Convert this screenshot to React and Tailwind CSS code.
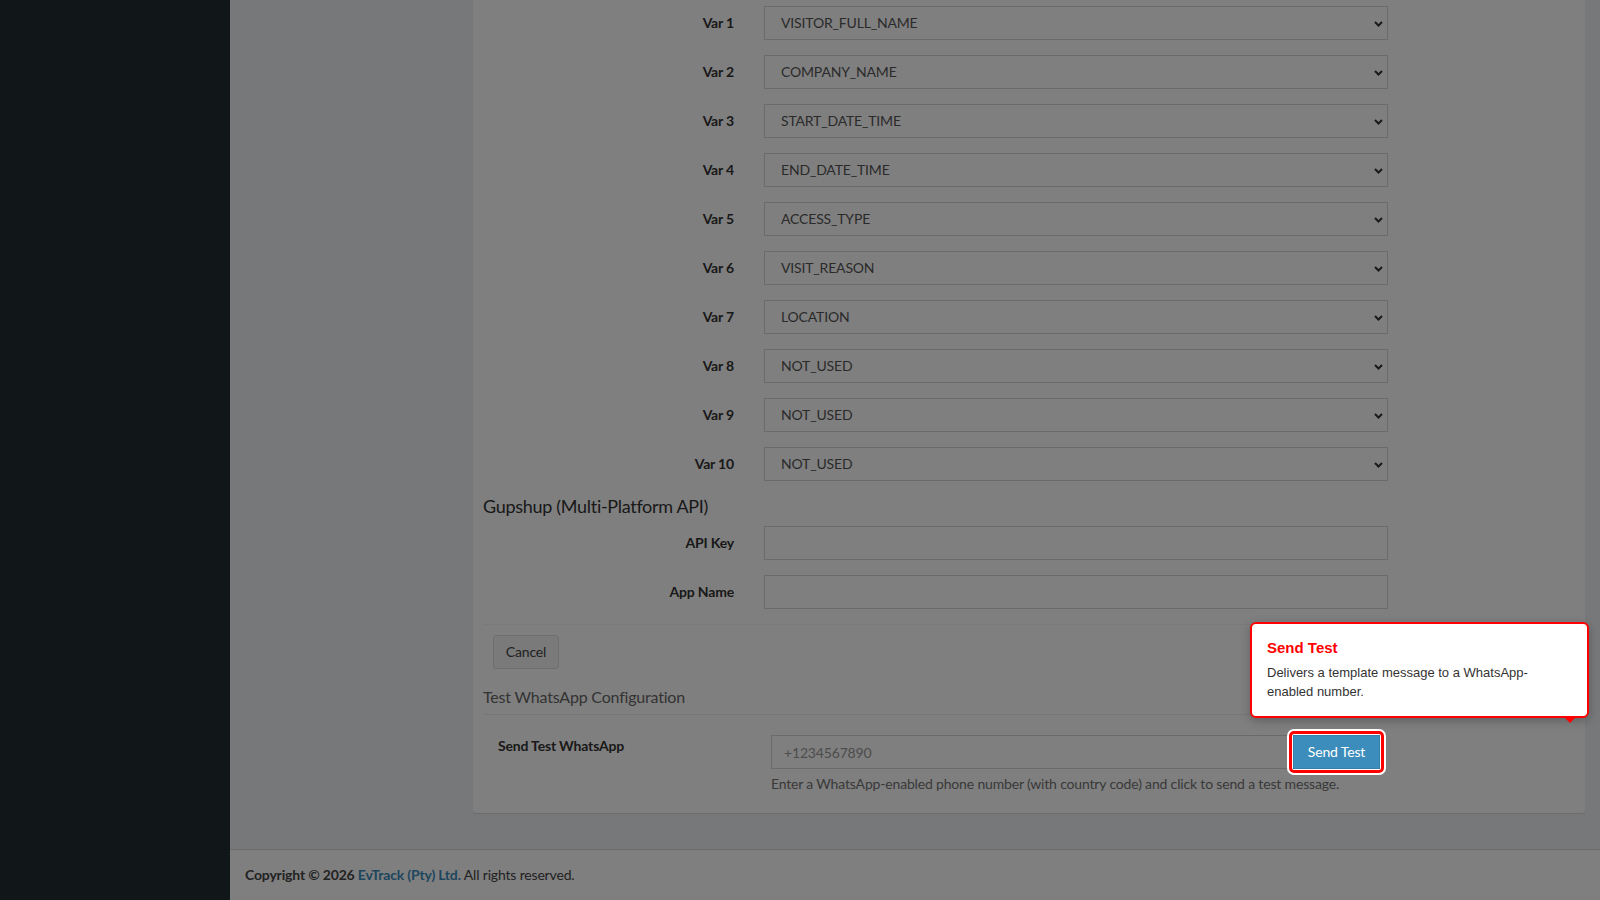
import React from 'react'

const variables = [
    'VISITOR_FULL_NAME',
    'COMPANY_NAME',
    'START_DATE_TIME',
    'END_DATE_TIME',
    'ACCESS_TYPE',
    'VISIT_REASON',
    'LOCATION',
    'NOT_USED',
    'NOT_USED',
    'NOT_USED',
]

function SelectBox({ value }) {
    return (
        <div className="relative flex h-[34px] w-[624px] items-center border border-[#d2d6de] bg-white pl-[16px] text-[#555]">
            {value}
            <svg className="absolute right-[4px] top-[14px]" width="9" height="6" viewBox="0 0 9 6" fill="none">
                <path d="M1 1l3.5 3.5L8 1" stroke="#333" strokeWidth="2" />
            </svg>
        </div>
    )
}

function FormRow({ label, children }) {
    return (
        <div className="mb-[15px] flex items-center">
            <label className="w-[251px] pr-0 text-right font-bold">{label}</label>
            <div className="ml-[30px]">{children}</div>
        </div>
    )
}

export default function App() {
    return (
        <div className="relative flex h-[900px] w-[1600px] overflow-hidden font-['Lato',sans-serif] text-[14px] leading-[20px] tracking-[-0.17px] text-[#333]">
            {/* Sidebar */}
            <aside className="w-[230px] shrink-0 bg-[#222d32]" />

            <div className="flex flex-1 flex-col bg-[#ecf0f5]">
                <main className="flex-1 pl-[243px] pr-[15px]">
                    <div className="rounded-b-[3px] bg-white px-[10px] pb-[19px] pt-[6px] shadow-[0_1px_1px_rgba(0,0,0,0.1)]">
                        {/* Template variables */}
                        {variables.map((v, i) => (
                            <FormRow key={i} label={`Var ${i + 1}`}>
                                <SelectBox value={v} />
                            </FormRow>
                        ))}

                        {/* Gupshup */}
                        <h4 className="mb-[10px] text-[18px] leading-[20px] tracking-[-0.3px] text-[#333]">Gupshup (Multi-Platform API)</h4>
                        <FormRow label="API Key">
                            <input className="h-[34px] w-[624px] border border-[#d2d6de] bg-white px-[12px] outline-none" />
                        </FormRow>
                        <FormRow label="App Name">
                            <input className="h-[34px] w-[624px] border border-[#d2d6de] bg-white px-[12px] outline-none" />
                        </FormRow>

                        <div className="border-t border-[#f4f4f4] px-[10px] pt-[10px]">
                            <button className="h-[34px] w-[66px] rounded-[3px] border border-[#ddd] bg-[#f4f4f4] text-[#444]">Cancel</button>
                        </div>

                        {/* Test section */}
                        <h4 className="mt-[18px] border-b border-[#eee] pb-[7px] text-[16px] leading-[20px] tracking-[-0.2px] text-[#666]">Test WhatsApp Configuration</h4>
                        <div className="mt-[20px] flex">
                            <label className="w-[288px] pl-[15px] pt-[1px] font-bold">Send Test WhatsApp</label>
                            <div>
                                <div className="flex w-[609px]">
                                    <input
                                        placeholder="+1234567890"
                                        className="h-[34px] flex-1 border border-[#d2d6de] bg-white px-[12px] outline-none placeholder:text-[#999]"
                                    />
                                    <div className="relative z-50 ml-[-1px]">
                                        <div className="absolute -inset-[4px] rounded-[5px] border-[3px] border-[#ff0000] bg-white shadow-[0_0_0_2px_#fff]" />
                                        <button className="relative h-[34px] w-[87px] border border-[#367fa9] bg-[#3c8dbc] text-white">Send Test</button>

                                        {/* Tour popover */}
                                        <div className="absolute bottom-[calc(100%+17px)] left-[-43px] w-[339px] rounded-[6px] border-2 border-[#ff0000] bg-white px-[15px] pb-[15px] pt-[13px] font-['Liberation_Sans',Arial,sans-serif] tracking-normal shadow-[0_3px_10px_rgba(0,0,0,0.25)]">
                                            <div className="text-[15px] font-bold leading-[22px] text-[#ff0000]">Send Test</div>
                                            <p className="mt-[4px] text-[13px] leading-[19px] text-[#333]">
                                                Delivers a template message to a WhatsApp-enabled number.
                                            </p>
                                            <span className="absolute bottom-[-7px] left-[313px] h-0 w-0 border-x-[5px] border-t-[5px] border-x-transparent border-t-[#ff0000]" />
                                        </div>
                                    </div>
                                </div>
                                <p className="mt-[5px] text-[#737373]">
                                    Enter a WhatsApp-enabled phone number (with country code) and click to send a test message.
                                </p>
                            </div>
                        </div>
                    </div>
                </main>

                {/* Footer */}
                <footer className="mt-[35px] h-[51px] border-t border-[#d2d6de] bg-white px-[15px] pt-[15px] text-[#444]">
                    <strong>Copyright © 2026 <span className="text-[#3c8dbc]">EvTrack (Pty) Ltd.</span></strong> All rights reserved.
                </footer>
            </div>

            {/* Dim overlay */}
            <div className="absolute inset-0 z-40 bg-black/50" />
        </div>
    )
}
